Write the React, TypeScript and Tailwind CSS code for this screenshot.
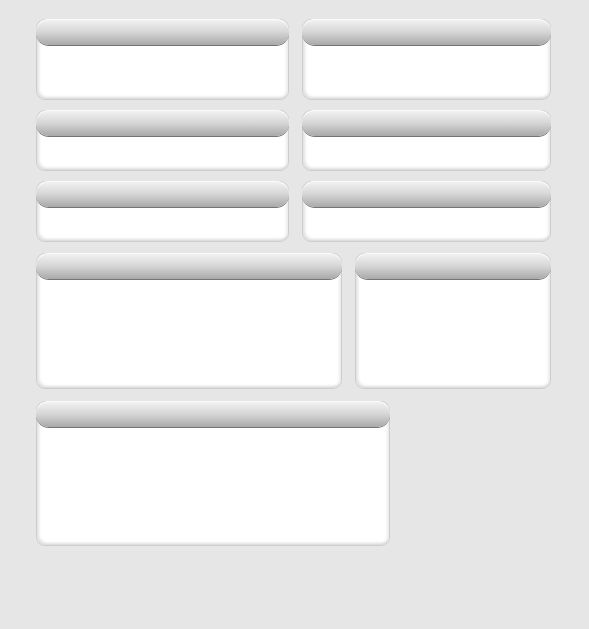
const rows: { w: string; h: string; mt: string }[] = [
  { w: '', h: 'h-[81px]', mt: 'mt-0' },
  { w: '', h: 'h-[61px]', mt: 'mt-[10px]' },
  { w: '', h: 'h-[61px]', mt: 'mt-[10px]' },
]

function Panel({ w, h }: { w: string; h: string }) {
  return (
    <div
      className={`${w} ${h} flex flex-col rounded-[9px] border border-[#cdcdcd] bg-white shadow-[inset_2px_-2px_3px_rgba(0,0,0,0.12),inset_-2px_0_3px_rgba(0,0,0,0.08)]`}
    >
      <div className="-mx-px -mt-px h-[26px] shrink-0 rounded-[13px] bg-gradient-to-b from-[#f4f4f4] via-[#d6d6d6] to-[#a9a9a9] shadow-[0_1px_0_#747474,inset_0_1px_0_#fafafa]" />
    </div>
  )
}

export default function App() {
  return (
    <div className="flex min-h-[629px] w-[589px] flex-col bg-[#e6e6e6] pl-[36px] pt-[19px]">
      {rows.map((r, i) => (
        <div key={i} className={`flex gap-[13px] ${r.mt}`}>
          <Panel w="w-[253px]" h={r.h} />
          <Panel w="w-[249px]" h={r.h} />
        </div>
      ))}
      <div className="mt-[11px] flex gap-[13px]">
        <Panel w="w-[306px]" h="h-[136px]" />
        <Panel w="w-[196px]" h="h-[136px]" />
      </div>
      <div className="mt-[12px] flex">
        <Panel w="w-[354px]" h="h-[145px]" />
      </div>
    </div>
  )
}
